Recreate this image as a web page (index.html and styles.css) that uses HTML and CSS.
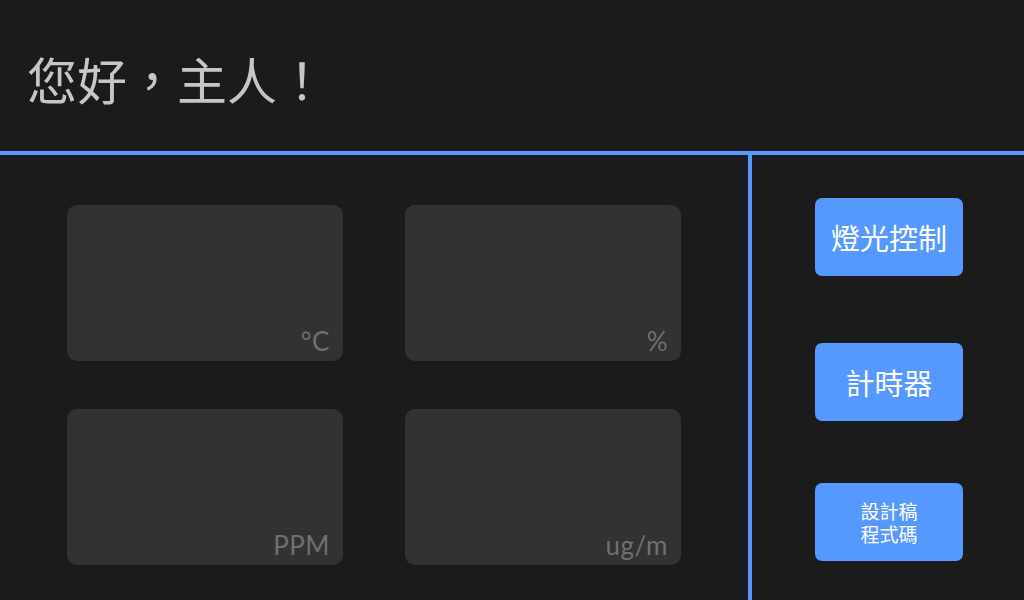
FILE: index.html
```html
<!DOCTYPE html>
<html lang="zh-Hant">
<head>
<meta charset="utf-8">
<link rel="stylesheet" href="styles.css">
</head>
<body>
<div class="app">
  <header class="header">
    <h1 class="greeting">您好，主人！</h1>
  </header>
  <main class="main">
    <section class="sensors">
      <div class="card"><span class="unit">°C</span></div>
      <div class="card"><span class="unit">%</span></div>
      <div class="card"><span class="unit">PPM</span></div>
      <div class="card"><span class="unit">ug/m</span></div>
    </section>
    <aside class="side">
      <button class="btn btn-lg b1">燈光控制</button>
      <button class="btn btn-lg b2">計時器</button>
      <button class="btn btn-sm b3"><span class="line">設計稿</span><span class="line">程式碼</span></button>
    </aside>
  </main>
</div>
</body>
</html>
```

FILE: styles.css
```css
html, body {
  margin: 0;
  padding: 0;
  background: #1b1b1b;
}
.app {
  width: 1024px;
  height: 600px;
  display: flex;
  flex-direction: column;
  overflow: hidden;
  font-family: "Noto Sans CJK TC", "Noto Sans", sans-serif;
}
.header {
  height: 151px;
  border-bottom: 4px solid #5599ff;
  display: flex;
  align-items: center;
  padding-left: 27px;
  flex-shrink: 0;
}
.greeting {
  margin: 0;
  font-size: 50px;
  font-weight: 400;
  color: #c6c6c6;
  line-height: 1;
  margin-top: 4px;
}
.main {
  flex: 1;
  display: flex;
}
.sensors {
  box-sizing: border-box;
  width: 752px;
  border-right: 4px solid #5599ff;
  padding: 50px 67px 35px 67px;
  display: grid;
  grid-template-columns: 276px 276px;
  grid-template-rows: 156px 156px;
  column-gap: 62px;
  row-gap: 48px;
}
.card {
  background: #323232;
  border-radius: 10px;
  display: flex;
  align-items: flex-end;
  justify-content: flex-end;
  padding: 0 13px 4px 0;
}
.unit {
  font-family: "Lato", "Noto Sans", sans-serif;
  font-size: 26px;
  font-weight: 400;
  color: #707070;
  line-height: 1.2;
  letter-spacing: 0.5px;
}
.side {
  flex: 1;
  display: flex;
  flex-direction: column;
  align-items: center;
  padding-top: 43px;
  padding-left: 2px;
}
.btn {
  width: 148px;
  height: 78px;
  border: none;
  border-radius: 7px;
  background: #5599ff;
  color: #ffffff;
  font-family: "Noto Sans CJK TC", sans-serif;
  padding: 0;
  display: flex;
  flex-direction: column;
  align-items: center;
  justify-content: center;
  text-align: center;
}
.btn-lg {
  font-size: 29px;
}
.btn-sm {
  font-size: 19px;
}
.line {
  display: block;
  line-height: 23px;
  height: 23px;
}
.b2 {
  margin-top: 67px;
}
.b3 {
  margin-top: 62px;
}
```
